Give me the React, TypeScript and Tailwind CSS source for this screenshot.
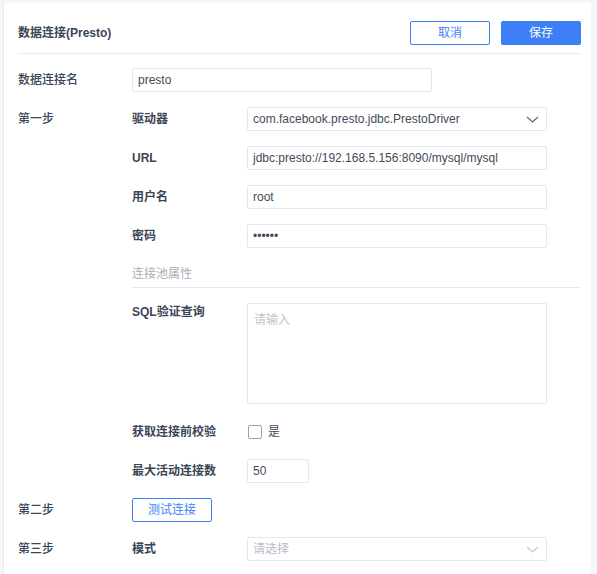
import React from "react";

const font = {
  fontFamily: '"Liberation Sans", "Noto Sans CJK SC", sans-serif',
};

function Chevron({ color }: { color: string }) {
  return (
    <svg width="13" height="7" viewBox="0 0 13 7" fill="none">
      <path d="M1 1l5.5 5 5.5-5" stroke={color} strokeWidth="1.1" />
    </svg>
  );
}

function Field({
  value,
  width = "w-[300px]",
  placeholder,
}: {
  value?: string;
  width?: string;
  placeholder?: string;
}) {
  return (
    <div
      className={`${width} h-[24px] border border-[#e4e7ec] rounded-[2px] px-[5px] flex items-center text-[12px] ${
        value ? "text-[#434b59]" : "text-[#b8bdc6]"
      }`}
    >
      {value ?? placeholder}
    </div>
  );
}

function Select({ value, placeholder }: { value?: string; placeholder?: string }) {
  return (
    <div className="w-[300px] h-[24px] border border-[#e4e7ec] rounded-[2px] pl-[5px] pr-[7px] flex items-center justify-between text-[12px]">
      <span className={value ? "text-[#434b59]" : "text-[#b8bdc6]"}>
        {value ?? placeholder}
      </span>
      <Chevron color={value ? "#5b6579" : "#c3c8d0"} />
    </div>
  );
}

function SubRow({
  label,
  children,
  className = "",
}: {
  label: string;
  children: React.ReactNode;
  className?: string;
}) {
  return (
    <div className={`flex items-center h-[24px] ${className}`}>
      <div className="w-[115px] font-semibold text-[#3a4556]">{label}</div>
      {children}
    </div>
  );
}

export default function App() {
  return (
    <div
      className="min-h-[574px] bg-[#f5f6f8] pt-[3px] pl-[3px] pr-[6px] text-[12px]"
      style={font}
    >
      <div className="bg-white border-l border-[#e6e9ee] min-h-[571px] pl-[14px] pr-[10px]">
        <div className="flex items-center justify-between pt-[18px] pb-[8px] border-b border-[#e8eaee]">
          <div className="font-bold text-[#3a4556]">数据连接(Presto)</div>
          <div className="flex gap-[11px]">
            <button className="w-[80px] h-[24px] border border-[#3d7ff6] rounded-[2px] text-[#3d7ff6] text-[12px] bg-white">
              取消
            </button>
            <button className="w-[80px] h-[24px] rounded-[2px] text-white text-[12px] bg-[#3d7ff6]">
              保存
            </button>
          </div>
        </div>

        <div className="flex items-center h-[24px] mt-[14px]">
          <div className="w-[114px] font-medium text-[#3a4556]">数据连接名</div>
          <Field value="presto" />
        </div>

        <div className="flex mt-[15px]">
          <div className="w-[114px] h-[24px] flex items-center font-medium text-[#3a4556]">
            第一步
          </div>
          <div className="flex-1">
            <SubRow label="驱动器">
              <Select value="com.facebook.presto.jdbc.PrestoDriver" />
            </SubRow>
            <SubRow label="URL" className="mt-[15px]">
              <Field value="jdbc:presto://192.168.5.156:8090/mysql/mysql" />
            </SubRow>
            <SubRow label="用户名" className="mt-[15px]">
              <Field value="root" />
            </SubRow>
            <SubRow label="密码" className="mt-[15px]">
              <Field value="••••••" />
            </SubRow>

            <div className="mt-[19px] pb-[6px] border-b border-[#e8eaee] text-[#a9afb9] leading-[14px]">
              连接池属性
            </div>

            <div className="flex mt-[15px]">
              <div className="w-[115px] font-semibold text-[#3a4556] leading-[18px]">
                SQL验证查询
              </div>
              <div className="w-[300px] h-[101px] border border-[#e4e7ec] rounded-[2px] px-[6px] pt-[9px] text-[#bfc4cc] leading-[14px]">
                请输入
              </div>
            </div>

            <SubRow label="获取连接前校验" className="mt-[16px]">
              <div className="flex items-center gap-[6px] pl-[1px]">
                <span className="w-[14px] h-[14px] border border-[#9aa3b2] rounded-[2px] bg-white" />
                <span className="text-[#434b59]">是</span>
              </div>
            </SubRow>
            <SubRow label="最大活动连接数" className="mt-[15px]">
              <Field value="50" width="w-[62px]" />
            </SubRow>
          </div>
        </div>

        <div className="flex items-center h-[24px] mt-[15px]">
          <div className="w-[114px] font-medium text-[#3a4556]">第二步</div>
          <button className="w-[80px] h-[24px] border border-[#3d7ff6] rounded-[2px] text-[#3d7ff6] text-[12px] bg-white">
            测试连接
          </button>
        </div>

        <div className="flex items-center h-[24px] mt-[15px]">
          <div className="w-[114px] font-medium text-[#3a4556]">第三步</div>
          <SubRow label="模式">
            <Select placeholder="请选择" />
          </SubRow>
        </div>
      </div>
    </div>
  );
}
